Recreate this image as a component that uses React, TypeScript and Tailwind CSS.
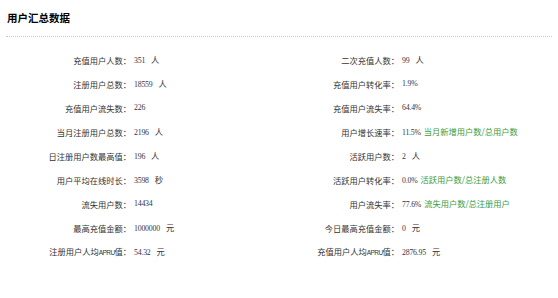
import React from "react";

type Cell = { label: React.ReactNode; num: string; unit?: string; note?: string };

const apru = <span className="font-['Liberation_Sans'] text-[6.5px] tracking-[-0.6px]">APRU</span>;

const rows: [Cell, Cell][] = [
  [{ label: "充值用户人数：", num: "351", unit: "人" }, { label: "二次充值人数：", num: "99", unit: "人" }],
  [{ label: "注册用户总数：", num: "18559", unit: "人" }, { label: "充值用户转化率：", num: "1.9%" }],
  [{ label: "充值用户流失数：", num: "226" }, { label: "充值用户流失率：", num: "64.4%" }],
  [{ label: "当月注册用户总数：", num: "2196", unit: "人" }, { label: "用户增长速率：", num: "11.5%", note: "当月新增用户数/总用户数" }],
  [{ label: "日注册用户数最高值：", num: "196", unit: "人" }, { label: "活跃用户数：", num: "2", unit: "人" }],
  [{ label: "用户平均在线时长：", num: "3598", unit: "秒" }, { label: "活跃用户转化率：", num: "0.0%", note: "活跃用户数/总注册人数" }],
  [{ label: "流失用户数：", num: "14434" }, { label: "用户流失率：", num: "77.6%", note: "流失用户数/总注册用户" }],
  [{ label: "最高充值金额：", num: "1000000", unit: "元" }, { label: "今日最高充值金额：", num: "0", unit: "元" }],
  [
    { label: <>注册用户人均{apru}值：</>, num: "54.32", unit: "元" },
    { label: <>充值用户人均{apru}值：</>, num: "2876.95", unit: "元" },
  ],
];

function Label({ c }: { c: Cell }) {
  return <div className="text-right text-[#333] whitespace-nowrap">{c.label}</div>;
}

function Value({ c }: { c: Cell }) {
  return (
    <div className="pl-[3px] whitespace-nowrap flex items-baseline text-[#334]">
      <span className="font-['Liberation_Serif'] text-[7.8px] tracking-[-0.2px]">{c.num}</span>
      {c.unit && <span className="ml-[6px] text-[#333]">{c.unit}</span>}
      {c.note && <span className="ml-[3px] text-[#3c9c3c]">{c.note}</span>}
    </div>
  );
}

export default function App() {
  return (
    <div className="w-[558px] h-[298px] bg-white overflow-hidden font-['Noto_Sans_CJK_SC',sans-serif] text-[8.25px] leading-none">
      <div className="pl-[7px] pt-[13px] h-[36px] text-[10.5px] font-bold text-black">用户汇总数据</div>
      <div className="mx-[6px] border-t border-dotted border-[#c8c8c8]" />
      <div className="mt-[11px] grid grid-cols-[131px_148px_120px_1fr] auto-rows-[24px] items-center">
        {rows.map(([l, r], i) => (
          <React.Fragment key={i}>
            <Label c={l} />
            <Value c={l} />
            <Label c={r} />
            <Value c={r} />
          </React.Fragment>
        ))}
      </div>
    </div>
  );
}
